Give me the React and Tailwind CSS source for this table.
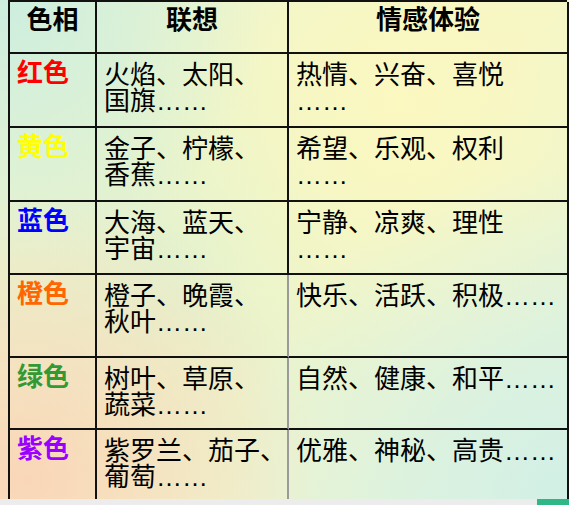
import React from "react";

const font = { fontFamily: '"Liberation Sans", "Noto Sans CJK SC", sans-serif' };

const rows = [
  { name: "红色", color: "text-[#ff0000]", a: "火焰、太阳、国旗……", aw: "w-[160px]", b: "热情、兴奋、喜悦……", bw: "w-[215px]", h: "h-[74px]" },
  { name: "黄色", color: "text-[#ffff00]", a: "金子、柠檬、香蕉……", aw: "w-[160px]", b: "希望、乐观、权利……", bw: "w-[215px]", h: "h-[74px]" },
  { name: "蓝色", color: "text-[#0000ff]", a: "大海、蓝天、宇宙……", aw: "w-[160px]", b: "宁静、凉爽、理性……", bw: "w-[215px]", h: "h-[73px]" },
  { name: "橙色", color: "text-[#ff6600]", a: "橙子、晚霞、秋叶……", aw: "w-[160px]", b: "快乐、活跃、积极……", bw: "w-[270px]", h: "h-[83px]", gray: true },
  { name: "绿色", color: "text-[#339933]", a: "树叶、草原、蔬菜……", aw: "w-[160px]", b: "自然、健康、和平……", bw: "w-[270px]", h: "h-[72px]", gray: true },
  { name: "紫色", color: "text-[#9900ff]", a: "紫罗兰、茄子、葡萄……", aw: "w-[183px]", b: "优雅、神秘、高贵……", bw: "w-[270px]", h: "h-[71px]", gray: true },
];

export default function App() {
  return (
    <div
      className="w-[569px] h-[505px] overflow-hidden relative flex flex-col bg-[radial-gradient(circle_at_0%_0%,#cdeede_0%,transparent_35%),radial-gradient(circle_at_5%_95%,#f9d6b8_0%,transparent_40%),radial-gradient(circle_at_100%_100%,#d2f0e6_0%,transparent_45%),radial-gradient(circle_at_70%_20%,#fbf8c0_0%,transparent_50%),radial-gradient(circle_at_30%_50%,#e2f2cf_0%,transparent_55%),linear-gradient(135deg,#e4f3d4,#f4f6c8_50%,#e2f3dc)]"
      style={font}
    >
      <div className="ml-[8px] w-[559px] h-[499px] border-l-2 border-t-2 border-[#111] flex flex-col text-black text-[26px] leading-[26px]">
        <div className="flex h-[52px] shrink-0">
          <div className="w-[87px] shrink-0 border-r-2 border-b-2 border-[#111] pt-[5px] text-center font-bold">色相</div>
          <div className="w-[192px] shrink-0 border-r-2 border-b-2 border-[#111] pt-[5px] text-center font-bold">联想</div>
          <div className="w-[280px] shrink-0 border-r-2 border-b-2 border-[#111] pt-[5px] text-center font-bold">情感体验</div>
        </div>
        {rows.map((r) => (
          <div key={r.name} className={`flex shrink-0 ${r.h}`}>
            <div className={`w-[87px] shrink-0 border-r-2 border-b-2 border-[#111] pl-[7px] pt-[6px] font-bold ${r.color}`}>
              {r.name}
            </div>
            <div className={`w-[192px] shrink-0 border-r-2 border-b-2 border-b-[#111] pl-[7px] pt-[8px] ${r.gray ? "border-r-[#9a9a9a]" : "border-r-[#111]"}`}>
              <p className={`${r.aw} [line-break:anywhere]`}>{r.a}</p>
            </div>
            <div className="w-[280px] shrink-0 border-r-2 border-b-2 border-[#111] pl-[7px] pt-[8px]">
              <p className={`${r.bw} [line-break:anywhere]`}>{r.b}</p>
            </div>
          </div>
        ))}
      </div>
      <div className="flex-1 bg-[#ececec] flex justify-end">
        <div className="w-[32px] h-full bg-[#2fb886]" />
      </div>
    </div>
  );
}
